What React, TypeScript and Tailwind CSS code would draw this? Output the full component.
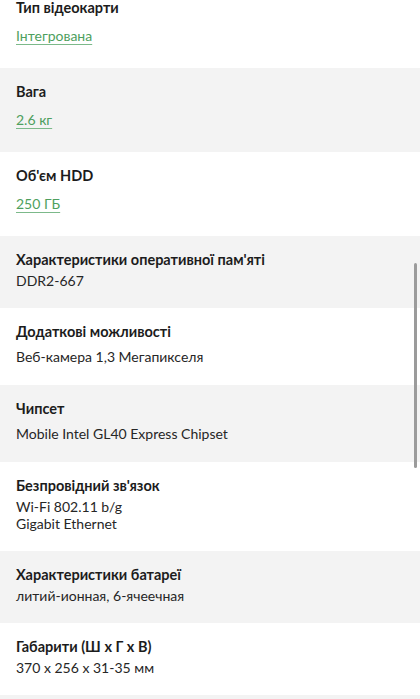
type Spec = {
  title: string;
  values: string[];
  kind: "link" | "tall" | "plain";
};

const specs: Spec[] = [
  { title: "Тип відеокарти", values: ["Інтегрована"], kind: "link" },
  { title: "Вага", values: ["2.6 кг"], kind: "link" },
  { title: "Об'єм HDD", values: ["250 ГБ"], kind: "link" },
  { title: "Характеристики оперативної пам'яті", values: ["DDR2-667"], kind: "plain" },
  { title: "Додаткові можливості", values: ["Веб-камера 1,3 Мегапикселя"], kind: "tall" },
  { title: "Чипсет", values: ["Mobile Intel GL40 Express Chipset"], kind: "tall" },
  { title: "Безпровідний зв'язок", values: ["Wi-Fi 802.11 b/g", "Gigabit Ethernet"], kind: "plain" },
  { title: "Характеристики батареї", values: ["литий-ионная, 6-ячеечная"], kind: "plain" },
  { title: "Габарити (Ш х Г х В)", values: ["370 x 256 x 31-35 мм"], kind: "plain" },
];

function SpecRow({ spec, gray }: { spec: Spec; gray: boolean }) {
  return (
    <div className={`${gray ? "bg-[#f3f3f3]" : "bg-white"} px-4 pt-[13px] ${spec.kind === "tall" ? "pb-[17px]" : "pb-[19px]"}`}>
      <p className="text-[14.5px] leading-[22px] font-bold text-[#1c1c1c]">{spec.title}</p>
      {spec.kind === "link" && (
        <div className="mt-[3px] leading-[26px]">
          <a href="#" className="text-[14px] text-[#4e9f5e] underline underline-offset-[3px] decoration-[#7cb98a]">
            {spec.values[0]}
          </a>
        </div>
      )}
      {spec.kind === "tall" && (
        <p className="mt-[3px] text-[14px] leading-[22px] text-[#262626]">{spec.values[0]}</p>
      )}
      {spec.kind === "plain" && (
        <div className="mt-[1px] text-[14px] leading-[17px] text-[#262626]">
          {spec.values.map((v) => (
            <p key={v}>{v}</p>
          ))}
        </div>
      )}
    </div>
  );
}

export default function App() {
  return (
    <div className="relative h-[699px] w-full overflow-hidden bg-white font-['Lato','Noto_Sans',sans-serif]">
      <div className="-mt-[16px]">
        {specs.map((s, i) => (
          <SpecRow key={s.title} spec={s} gray={i % 2 === 1} />
        ))}
        <div className="h-[60px] bg-[#f3f3f3]" />
      </div>
      <div className="absolute left-[414px] top-[263px] h-[205px] w-[3px] rounded-full bg-[#9b9b9b]" />
    </div>
  );
}
